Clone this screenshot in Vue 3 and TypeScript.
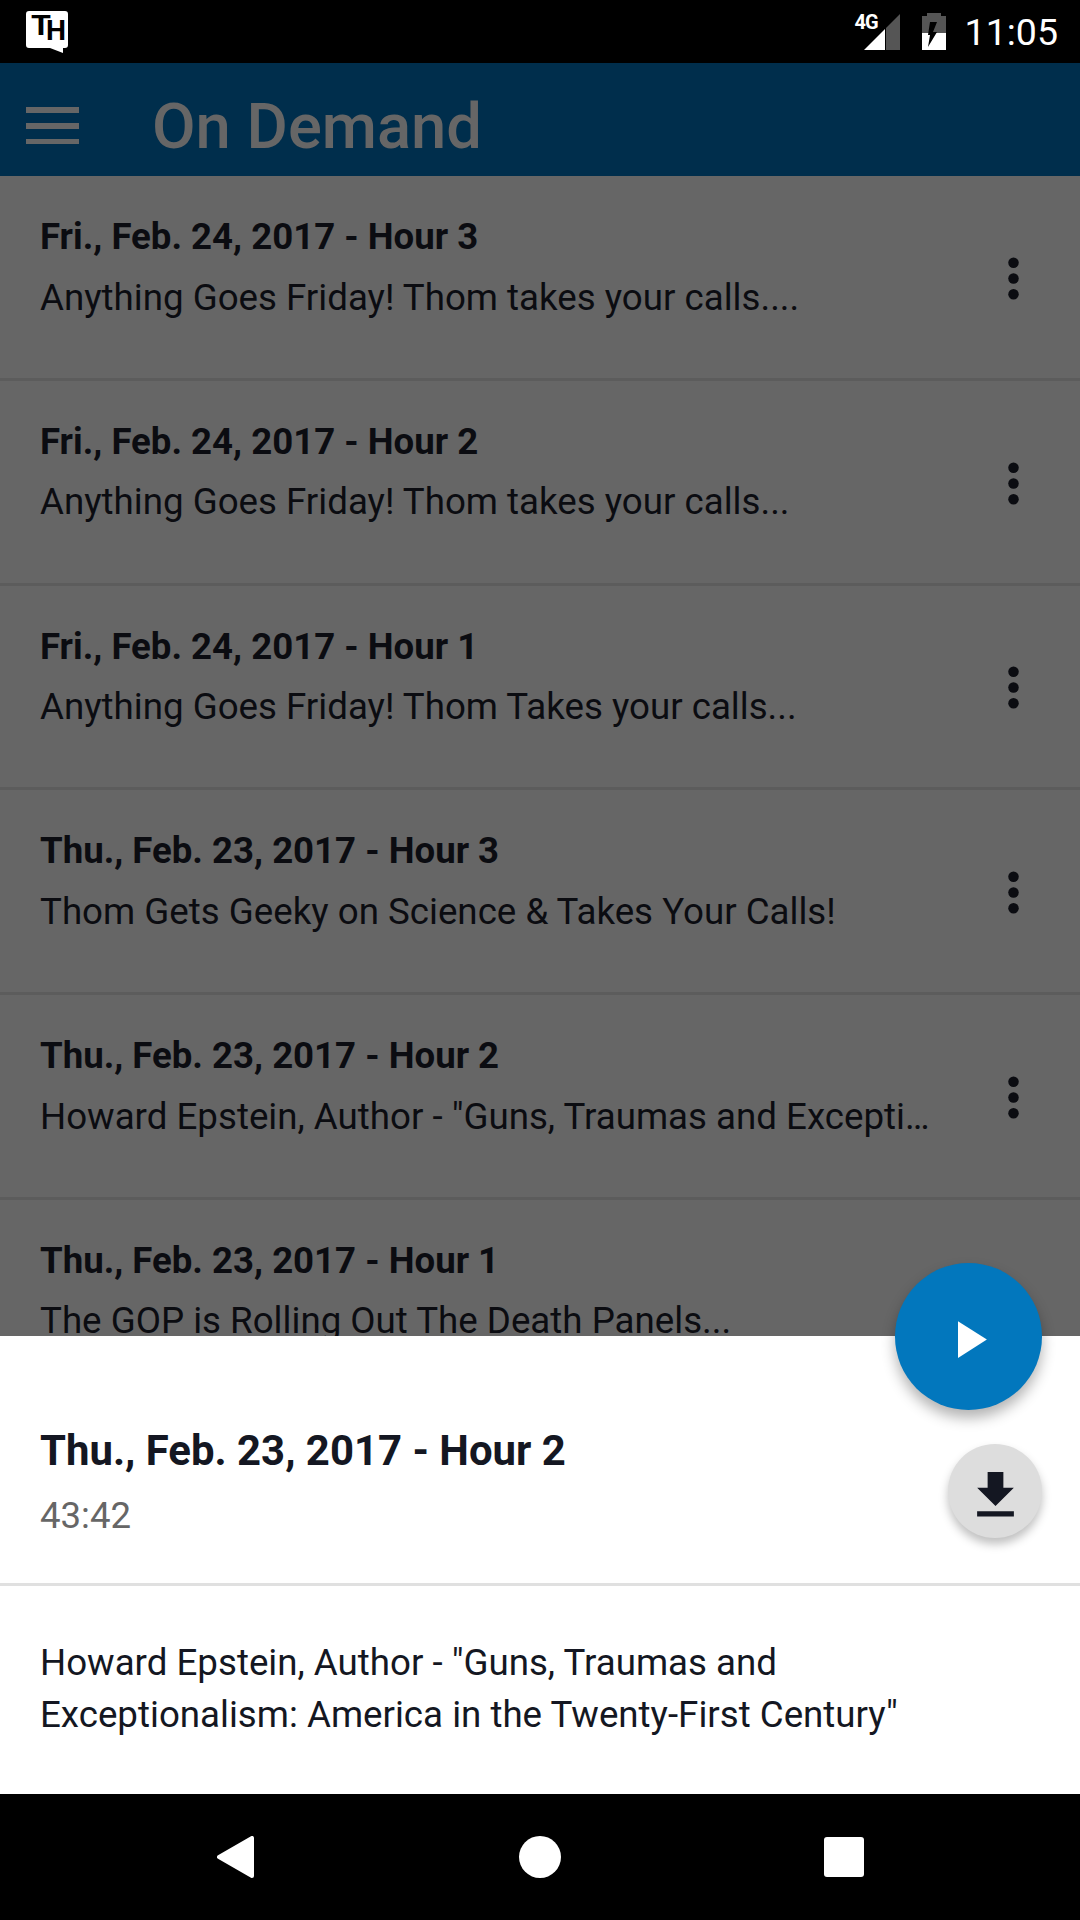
<template>
  <div class="screen">
    <header class="status-bar">
      <svg class="logo" width="42" height="42" viewBox="0 0 42 42">
        <path fill="#fff" d="M3 0h36a3 3 0 0 1 3 3v31a3 3 0 0 1-3 3h-2v5l-13-5H3a3 3 0 0 1-3-3V3a3 3 0 0 1 3-3z" />
        <text x="5" y="24" textLength="20" lengthAdjust="spacingAndGlyphs" class="logo-text">T</text>
        <text x="20" y="29" textLength="20" lengthAdjust="spacingAndGlyphs" class="logo-text">H</text>
      </svg>
      <div class="status-right">
        <div class="signal">
          <span class="net">4G</span>
          <svg width="36" height="36" viewBox="0 0 36 36">
            <path fill="#555" d="M36 0v36H22V14z" />
            <path fill="#fff" d="M21 15v21H0z" />
          </svg>
        </div>
        <svg class="battery" width="24" height="37" viewBox="0 0 24 37">
          <path fill="#555" d="M5 0h14v3h5v17H0V3h5z" />
          <path fill="#fff" d="M0 20h24v17H0z" />
          <path fill="#000" d="M8 9h7l-4 10h4L6 34l2-12H6z" />
        </svg>
        <span class="clock">11:05</span>
      </div>
    </header>

    <div class="app-bar">
      <svg class="menu" width="53" height="37" viewBox="0 0 53 37">
        <path fill="#666" d="M0 0h53v6H0zM0 16h53v6H0zM0 32h53v5H0z" />
      </svg>
      <span class="bar-title">On Demand</span>
    </div>

    <main class="list">
      <div v-for="item in episodes" :key="item.title" class="row">
        <div class="row-text">
          <div class="row-title">{{ item.title }}</div>
          <div class="row-sub">{{ item.sub }}</div>
        </div>
        <svg class="more" width="63" height="63" viewBox="0 0 24 24">
          <circle cx="12" cy="6" r="2" />
          <circle cx="12" cy="12" r="2" />
          <circle cx="12" cy="18" r="2" />
        </svg>
      </div>
    </main>

    <section class="sheet">
      <button type="button" class="fab" aria-label="play">
        <svg width="63" height="63" viewBox="0 0 24 24"><path fill="#fff" d="M8 5v14l11-7z" /></svg>
      </button>
      <div class="sheet-head">
        <div>
          <div class="sheet-title">Thu., Feb. 23, 2017 - Hour 2</div>
          <div class="sheet-time">43:42</div>
        </div>
        <button type="button" class="download" aria-label="download">
          <svg width="63" height="63" viewBox="0 0 24 24">
            <path fill="#141722" d="M19 9h-4V3H9v6H5l7 7 7-7zM5 18v2h14v-2H5z" />
          </svg>
        </button>
      </div>
      <p class="sheet-desc">
        Howard Epstein, Author - "Guns, Traumas and<br />
        Exceptionalism: America in the Twenty-First Century"
      </p>
    </section>

    <footer class="nav-bar">
      <svg width="37" height="42" viewBox="0 0 37 42">
        <path fill="#fff" stroke="#fff" stroke-width="4" stroke-linejoin="round" d="M35 2v38L2 21z" />
      </svg>
      <span class="nav-home"></span>
      <span class="nav-recent"></span>
    </footer>
  </div>
</template>

<script setup lang="ts">
interface Episode {
  title: string;
  sub: string;
}

const episodes: Episode[] = [
  { title: "Fri., Feb. 24, 2017 - Hour 3", sub: "Anything Goes Friday! Thom takes your calls...." },
  { title: "Fri., Feb. 24, 2017 - Hour 2", sub: "Anything Goes Friday! Thom takes your calls..." },
  { title: "Fri., Feb. 24, 2017 - Hour 1", sub: "Anything Goes Friday! Thom Takes your calls..." },
  { title: "Thu., Feb. 23, 2017 - Hour 3", sub: "Thom Gets Geeky on Science & Takes Your Calls!" },
  {
    title: "Thu., Feb. 23, 2017 - Hour 2",
    sub: 'Howard Epstein, Author - "Guns, Traumas and Exceptionalism: America in the Twenty-First Century"',
  },
  { title: "Thu., Feb. 23, 2017 - Hour 1", sub: "The GOP is Rolling Out The Death Panels..." },
];
</script>

<style>
html,
body {
  margin: 0;
  background: #000;
}
</style>

<style scoped>
.screen {
  display: flex;
  flex-direction: column;
  width: 1080px;
  height: 1920px;
  overflow: hidden;
  font-family: Roboto, "Noto Sans", sans-serif;
  color: #141722;
}

.status-bar {
  display: flex;
  align-items: center;
  justify-content: space-between;
  flex: none;
  height: 63px;
  padding: 0 22px 0 26px;
  box-sizing: border-box;
  background: #000;
}

.logo-text {
  font-family: Roboto, sans-serif;
  font-size: 27px;
  font-weight: 700;
  fill: #000;
}

.status-right {
  display: flex;
  align-items: center;
}

.signal {
  position: relative;
  display: flex;
  height: 36px;
  margin-top: 1px;
}

.net {
  position: absolute;
  top: 0;
  left: -9px;
  font-size: 20px;
  font-weight: 700;
  line-height: 16px;
  letter-spacing: -1px;
  color: #fff;
}

.battery {
  margin-left: 22px;
  margin-top: -1px;
}

.clock {
  margin-left: 19px;
  font-size: 37.5px;
  line-height: 44px;
  color: #fff;
}

.app-bar {
  display: flex;
  align-items: center;
  flex: none;
  height: 113px;
  padding: 12px 0 0 26px;
  box-sizing: border-box;
  background: #002e4c;
}

.bar-title {
  margin-left: 73px;
  font-size: 63.3px;
  font-weight: 500;
  color: #666;
}

.list {
  flex: 1;
  min-height: 0;
  overflow: hidden;
  background: #666;
}

.row {
  display: flex;
  align-items: center;
  height: 204.75px;
  padding: 3px 35px 0 40px;
  box-sizing: border-box;
  border-bottom: 3px solid #5c5c5c;
}

.row-text {
  flex: 1;
  min-width: 0;
  margin-right: 44px;
  padding-top: 33px;
  align-self: flex-start;
}

.row-title {
  font-size: 36.6px;
  font-weight: 700;
  line-height: 50px;
  color: #0b0c11;
}

.row-sub {
  margin-top: 10.6px;
  overflow: hidden;
  font-size: 36.7px;
  line-height: 50px;
  color: #0b0c11;
  text-overflow: ellipsis;
  white-space: nowrap;
}

.more {
  flex: none;
  fill: #0b0c11;
}

.sheet {
  position: relative;
  flex: none;
  height: 458px;
  background: #fff;
}

.fab,
.download {
  display: flex;
  align-items: center;
  justify-content: center;
  padding: 0;
  border: 0;
  border-radius: 50%;
}

.fab {
  position: absolute;
  top: -73px;
  right: 38px;
  width: 147px;
  height: 147px;
  padding-top: 5px;
  background: #0277bd;
  box-shadow: 0 8px 14px rgba(0, 0, 0, 0.3);
}

.sheet-head {
  display: flex;
  align-items: flex-start;
  justify-content: space-between;
  height: 249.5px;
  padding: 89px 38px 0 40px;
  box-sizing: border-box;
  border-bottom: 3px solid #e0e0e0;
}

.sheet-title {
  font-size: 41.9px;
  font-weight: 700;
  line-height: 52px;
}

.sheet-time {
  margin-top: 14px;
  font-size: 36.6px;
  line-height: 50px;
  color: #666;
}

.download {
  width: 94px;
  height: 94px;
  margin-top: 19px;
  padding-top: 9px;
  background: #ddd;
  box-shadow: 0 6px 10px rgba(0, 0, 0, 0.25);
}

.sheet-desc {
  margin: 51px 40px 0;
  font-size: 36.7px;
  line-height: 52px;
}

.nav-bar {
  display: flex;
  align-items: center;
  flex: none;
  height: 126px;
  padding-left: 217px;
  box-sizing: border-box;
  background: #000;
}

.nav-home {
  width: 42px;
  height: 42px;
  margin-left: 265px;
  border-radius: 50%;
  background: #fff;
}

.nav-recent {
  width: 40px;
  height: 40px;
  margin-left: 263px;
  border-radius: 3px;
  background: #fff;
}
</style>
